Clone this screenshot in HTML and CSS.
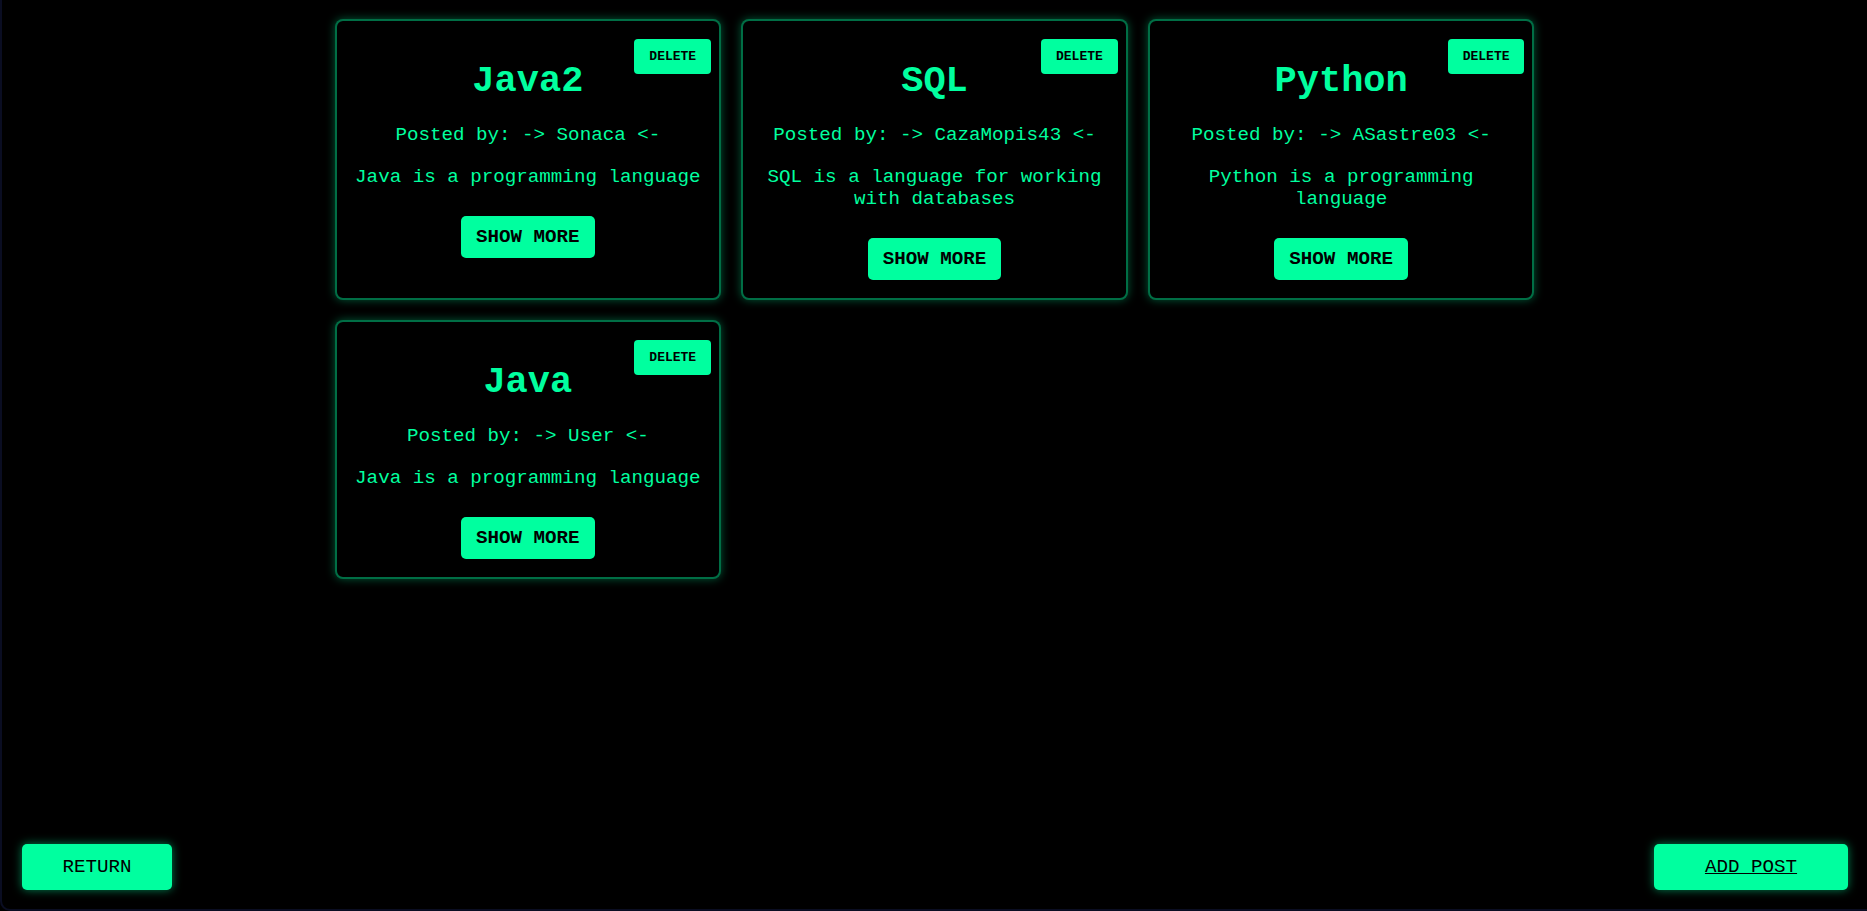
FILE: index.html
```html
<!DOCTYPE html>
<html lang="en">
<head>
<meta charset="utf-8">
<title>Posts</title>
<link rel="stylesheet" href="styles.css">
</head>
<body>
<div class="page">
  <main class="grid">
    <article class="card">
      <button class="delete">DELETE</button>
      <h2 class="title">Java2</h2>
      <p class="author">Posted by: -&gt; Sonaca &lt;-</p>
      <p class="desc">Java is a programming language</p>
      <div class="actions"><button class="more">SHOW MORE</button></div>
    </article>
    <article class="card">
      <button class="delete">DELETE</button>
      <h2 class="title">SQL</h2>
      <p class="author">Posted by: -&gt; CazaMopis43 &lt;-</p>
      <p class="desc">SQL is a language for working with databases</p>
      <div class="actions"><button class="more">SHOW MORE</button></div>
    </article>
    <article class="card">
      <button class="delete">DELETE</button>
      <h2 class="title">Python</h2>
      <p class="author">Posted by: -&gt; ASastre03 &lt;-</p>
      <p class="desc">Python is a programming language</p>
      <div class="actions"><button class="more">SHOW MORE</button></div>
    </article>
    <article class="card">
      <button class="delete">DELETE</button>
      <h2 class="title">Java</h2>
      <p class="author">Posted by: -&gt; User &lt;-</p>
      <p class="desc">Java is a programming language</p>
      <div class="actions"><button class="more">SHOW MORE</button></div>
    </article>
  </main>
  <footer class="bottom">
    <button class="nav return">RETURN</button>
    <button class="nav add"><span class="link">ADD POST</span></button>
  </footer>
</div>
</body>
</html>
```

FILE: styles.css
```css
* { box-sizing: border-box; }

html, body {
  margin: 0;
  padding: 0;
  background: #000;
  height: 100%;
}

body {
  font-family: "Liberation Mono", "Courier New", monospace;
  color: #00ff9f;
}

.page {
  height: 100vh;
  display: flex;
  flex-direction: column;
  border-left: 2px solid #0a0d22;
  border-bottom: 2px solid #0a0d22;
  border-bottom-left-radius: 10px;
  overflow: hidden;
}

.grid {
  width: 1200px;
  margin: 19px auto 0;
  display: grid;
  grid-template-columns: repeat(3, 1fr);
  gap: 20px;
}

.card {
  position: relative;
  background: #000;
  border: 2px solid rgba(0, 200, 125, 0.55);
  border-radius: 8px;
  box-shadow: 0 0 10px rgba(0, 255, 159, 0.35);
  padding: 0 15px 18px;
  text-align: center;
}

.delete {
  position: absolute;
  top: 18px;
  right: 8px;
  font-family: "Liberation Mono", "Courier New", monospace;
  font-weight: bold;
  font-size: 13px;
  line-height: 15px;
  padding: 10px 15px;
  background: #00ff9f;
  color: #000;
  border: none;
  border-radius: 4px;
}

.title {
  margin: 39px 0 0;
  font-size: 37px;
  font-weight: bold;
  line-height: 42px;
}

.author {
  margin: 22px 0 0;
  font-size: 19.2px;
}

.desc {
  margin: 20px 0 0;
  font-size: 19.2px;
}

.actions {
  margin-top: 28px;
}

.more {
  font-family: "Liberation Mono", "Courier New", monospace;
  font-weight: bold;
  font-size: 19.2px;
  line-height: 22px;
  padding: 10px 15px;
  background: #00ff9f;
  color: #000;
  border: none;
  border-radius: 5px;
}

.bottom {
  margin-top: auto;
  display: flex;
  justify-content: space-between;
  align-items: center;
  padding: 0 19px 19px 20px;
}

.nav {
  font-family: "Liberation Mono", "Courier New", monospace;
  font-size: 19.2px;
  line-height: 22px;
  padding: 12px 0;
  background: #00ff9f;
  color: #000;
  border: none;
  border-radius: 5px;
  box-shadow: 0 0 10px rgba(0, 255, 159, 0.5);
  text-align: center;
}

.return { width: 150px; }
.add { width: 194px; }

.link { text-decoration: underline; }
```
